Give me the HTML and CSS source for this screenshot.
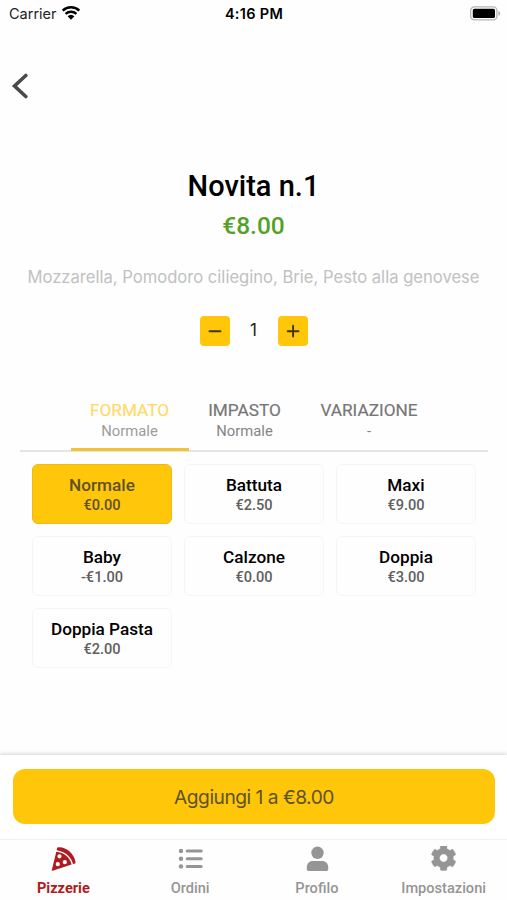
FILE: index.html
```html
<!DOCTYPE html>
<html lang="it">
<head>
<meta charset="utf-8">
<title>Novita n.1</title>
<link rel="stylesheet" href="styles.css">
</head>
<body>
<div class="screen">
  <header class="status">
    <div class="status-left">
      <span class="carrier">Carrier</span>
      <svg width="20" height="16" viewBox="0 0 20 16"><path d="M1.700 5.700a12 12 0 0 1 16.600 0M4.600 8.900a7.900 7.900 0 0 1 10.800 0" fill="none" stroke="#000" stroke-width="2.500"/><path d="M6.600 11.300a5 5 0 0 1 6.800 0L10 14.800z"/></svg>
    </div>
    <span class="time">4:16 PM</span>
    <div class="status-right">
      <svg width="31" height="15" viewBox="0 0 31 15"><rect x=".7" y=".9" width="26.2" height="13" rx="3.7" fill="#fff" stroke="#b5b5b5" stroke-width="1.3"/><rect x="2.8" y="2.8" width="22.2" height="9.2" rx="1.6"/><path d="M28.4 5v4.8q1.800-.7 1.800-2.400T28.400 5" fill="#b0b0b0"/></svg>
    </div>
  </header>

  <main>
    <div class="topbar"><svg class="back" width="18" height="26" viewBox="0 0 18 26"><path d="M14.8 2.500 3.500 13l11.300 10.500" fill="none" stroke="#4a4a4a" stroke-width="3.600" stroke-linecap="round" stroke-linejoin="miter"/></svg></div>
    <h1>Novita n.1</h1>
    <p class="price">€8.00</p>
    <p class="ingredients">Mozzarella, Pomodoro ciliegino, Brie, Pesto alla genovese</p>
    <div class="stepper">
      <button><svg width="30" height="30" viewBox="0 0 30 30"><path d="M9.500 15.200h11" stroke="#3d3520" stroke-width="1.900" stroke-linecap="round"/></svg></button>
      <span class="count">1</span>
      <button><svg width="30" height="30" viewBox="0 0 30 30"><path d="M9.700 15.200h10.800M15.100 9.800v10.800" stroke="#3d3520" stroke-width="1.900" stroke-linecap="round"/></svg></button>
    </div>
    <div class="tabs">
      <div class="tab formato active"><b>FORMATO</b><span>Normale</span></div>
      <div class="tab impasto"><b>IMPASTO</b><span>Normale</span></div>
      <div class="tab variazione"><b>VARIAZIONE</b><span>-</span></div>
    </div>
    <div class="options">
      <div class="option selected"><b>Normale</b><span>€0.00</span></div>
      <div class="option"><b>Battuta</b><span>€2.50</span></div>
      <div class="option"><b>Maxi</b><span>€9.00</span></div>
      <div class="option"><b>Baby</b><span>-€1.00</span></div>
      <div class="option"><b>Calzone</b><span>€0.00</span></div>
      <div class="option"><b>Doppia</b><span>€3.00</span></div>
      <div class="option"><b>Doppia Pasta</b><span>€2.00</span></div>
    </div>
  </main>

  <div class="cart"><button class="add">Aggiungi 1 a €8.00</button></div>

  <nav>
    <div class="item current">
      <svg width="26" height="26" viewBox="-1.200 .9 26 26"><path d="M6.300 2.300C14.500 1.100 22.800 8.200 24.300 16.600q.3 1.800-1.100 2.100l-1.400.3C20.300 11.800 14 6.300 5.500 5.100l.3-2.200q.1-.5.5-.6z"/><path fill-rule="evenodd" d="M5.100 6.700c7.800.5 13.700 5.700 15.300 12.800L1.400 25.700q-1.100.2-.8-.9zM8.300 9.100a2.100 2.100 0 1 0 0 4.200 2.100 2.100 0 0 0 0-4.200zM6.600 17a2.100 2.100 0 1 0 0 4.200 2.100 2.100 0 0 0 0-4.200zM13.600 15a2.100 2.100 0 1 0 0 4.200 2.100 2.100 0 0 0 0-4.200z"/></svg>
      <span>Pizzerie</span>
    </div>
    <div class="item">
      <svg width="26" height="26" viewBox="0 .9 26 26"><circle cx="4" cy="5.900" r="2.200"/><circle cx="4" cy="13.600" r="2.200"/><circle cx="4" cy="21.300" r="2.200"/><path d="M10.200 5.900h14M10.200 13.600h14M10.200 21.300h14" stroke="currentColor" stroke-width="3" stroke-linecap="round"/></svg>
      <span>Ordini</span>
    </div>
    <div class="item">
      <svg width="26" height="26" viewBox="-.5 .9 26 26"><circle cx="13" cy="7.700" r="6.200"/><path d="M8.300 16h9.400c3.500 0 6 2.700 6 6.200v2q0 1.700-1.700 1.700H4q-1.700 0-1.700-1.700v-2c0-3.500 2.500-6.200 6-6.200z"/></svg>
      <span>Profilo</span>
    </div>
    <div class="item">
      <svg width="26" height="26" viewBox="8 20 512 512"><path d="M487.400 315.700l-42.600-24.600c4.300-23.200 4.300-47 0-70.200l42.600-24.600c4.900-2.800 7.100-8.600 5.500-14-11.100-35.600-30-67.800-54.700-94.600-3.800-4.100-10-5.100-14.800-2.300L380.800 110c-17.900-15.400-38.500-27.300-60.800-35.100V25.800c0-5.600-3.900-10.500-9.400-11.700-36.700-8.200-74.300-7.800-109.200 0-5.500 1.200-9.400 6.100-9.400 11.700V75c-22.200 7.900-42.800 19.800-60.800 35.100L88.700 85.500c-4.900-2.800-11-1.900-14.800 2.300-24.700 26.700-43.600 58.900-54.700 94.600-1.700 5.400.6 11.200 5.500 14L67.300 221c-4.300 23.200-4.300 47 0 70.200l-42.600 24.600c-4.900 2.800-7.100 8.600-5.500 14 11.100 35.600 30 67.800 54.700 94.600 3.800 4.100 10 5.100 14.800 2.300l42.600-24.600c17.900 15.400 38.500 27.300 60.800 35.100v49.200c0 5.600 3.900 10.500 9.400 11.700 36.700 8.200 74.300 7.800 109.200 0 5.500-1.200 9.400-6.100 9.400-11.700v-49.200c22.200-7.900 42.800-19.800 60.800-35.100l42.600 24.600c4.900 2.800 11 1.900 14.800-2.300 24.700-26.700 43.600-58.900 54.700-94.600 1.500-5.500-.7-11.300-5.600-14.100zM256 336c-44.100 0-80-35.900-80-80s35.900-80 80-80 80 35.900 80 80-35.900 80-80 80z" stroke="currentColor" stroke-width="8" stroke-linejoin="round"/></svg>
      <span>Impostazioni</span>
    </div>
  </nav>
</div>
</body>
</html>
```
FILE: styles.css
```css
* { box-sizing: border-box; }
body { margin: 0; background: #fefefe; font-family: Roboto, sans-serif; color: #000; }
h1, p { margin: 0; }
b { font-weight: 500; }
svg { display: block; }
button { border: 0; padding: 0; background: #ffc60a; font: inherit; }
.screen { width: 507px; height: 900px; display: flex; flex-direction: column; overflow: hidden; }
main { flex: 1; }

.status { height: 28px; display: grid; grid-template-columns: 1fr auto 1fr; align-items: center; padding: 0 6px 2px 9px; font-family: Inter, sans-serif; font-size: 14.5px; }
.status-left { display: flex; align-items: center; gap: 4px; color: #222; }
.time { font-weight: 600; letter-spacing: .3px; margin-right: 2px; }
.status-right { display: flex; justify-content: flex-end; }

.topbar { height: 136px; padding: 45px 0 0 11px; }
h1 { height: 44px; line-height: 44px; text-align: center; font-size: 29px; font-weight: 500; letter-spacing: 0; }
.price { height: 36px; line-height: 36px; text-align: center; font-size: 24.5px; font-weight: 500; color: #53a227; }
.ingredients { margin-top: 17px; height: 32px; line-height: 33px; text-align: center; white-space: nowrap; font-family: Inter, sans-serif; font-size: 16.6px; color: #c1c1c1; }
.stepper { margin-top: 23px; display: flex; justify-content: center; }
.stepper button { width: 30px; height: 30px; border-radius: 4px; }
.count { width: 48px; line-height: 29px; text-align: center; font-family: Inter, sans-serif; font-size: 17px; color: #222; }

.tabs { margin: 46px 19px 0 20px; height: 60px; display: flex; justify-content: center; border-bottom: 2px solid #e5e5e5; }
.tab { height: 59px; padding-top: 7px; display: flex; flex-direction: column; align-items: center; color: #777; }
.tab b { font-size: 17.2px; line-height: 22px; font-weight: 400; -webkit-text-stroke: .2px; }
.tab span { font-size: 14.8px; line-height: 20px; color: #858585; }
.formato { width: 118px; border-bottom: 3px solid #f5c135; }
.impasto { width: 112px; }
.variazione { width: 137px; }
.active b { color: #ffda69; }
.active span { color: #9c9c9c; }

.options { padding: 12px 32px 0; display: grid; grid-template-columns: repeat(3, 140px); column-gap: 12px; row-gap: 12px; }
.option { height: 60px; border: 1px solid #f5f5f5; border-radius: 6px; padding-top: 10px; display: flex; flex-direction: column; align-items: center; }
.option b { font-size: 17.2px; line-height: 21px; }
.option span { font-size: 14.6px; line-height: 19px; font-weight: 500; color: #606060; }
.selected { background: #ffc60a; border-color: #efba12; }
.selected b, .selected span { color: #5d512c; }

.cart { height: 84px; padding: 14px 12px 0 13px; background: #fff; box-shadow: 0 -1px 4px rgba(0,0,0,.18); }
.add { width: 482px; height: 55px; border-radius: 12px; padding-top: 1px; font-family: Inter, sans-serif; font-size: 19.2px; letter-spacing: -.5px; color: #5d532b; }
nav { height: 61px; display: grid; grid-template-columns: repeat(4, 1fr); border-top: 1px solid #f0f0f0; background: #fefefe; }
.item { display: flex; flex-direction: column; align-items: center; padding-top: 6px; color: #959595; font-size: 14.6px; font-weight: 500; }
.item svg { fill: currentColor; }
.item span { line-height: 20px; margin-top: 6px; }
.current { color: #b01b20; }
.current span { font-weight: 700; }
```
